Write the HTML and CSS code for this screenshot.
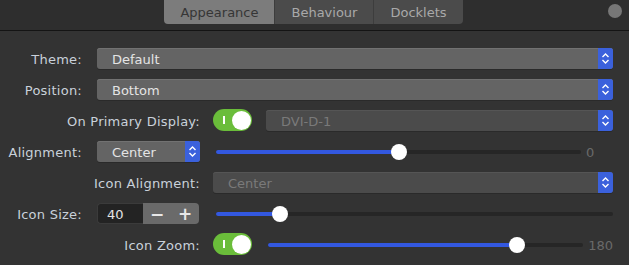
FILE: index.html
```html
<!DOCTYPE html>
<html lang="en">
<head>
    <meta charset="UTF-8">
    <meta name="viewport" content="width=device-width, initial-scale=1.0">
    <title>Dock Preferences</title>
    <link rel="stylesheet" href="styles.css">
</head>
<body>

<header class="topbar">
    <nav class="tabs">
        <span class="tab active">Appearance</span>
        <span class="tab">Behaviour</span>
        <span class="tab">Docklets</span>
    </nav>
    <span class="dot"></span>
</header>

<main class="prefs">
    <!-- theme -->
    <span class="lbl">Theme:</span>
    <div class="combo wide">
        <span class="combo-value">Default</span>
        <span class="combo-btn"><svg width="15" height="21" viewBox="0 0 15 21"><polyline points="4.5,9 7.5,6 10.5,9"/><polyline points="4.5,12 7.5,15 10.5,12"/></svg></span>
    </div>

    <!-- position -->
    <span class="lbl">Position:</span>
    <div class="combo wide">
        <span class="combo-value">Bottom</span>
        <span class="combo-btn"><svg width="15" height="21" viewBox="0 0 15 21"><polyline points="4.5,9 7.5,6 10.5,9"/><polyline points="4.5,12 7.5,15 10.5,12"/></svg></span>
    </div>

    <!-- primary display -->
    <span class="lbl lbl-long">On Primary Display:</span>
    <div class="switch"><span class="switch-mark"></span><span class="switch-knob"></span></div>
    <div class="combo disabled last">
        <span class="combo-value">DVI-D-1</span>
        <span class="combo-btn"><svg width="15" height="21" viewBox="0 0 15 21"><polyline points="4.5,9 7.5,6 10.5,9"/><polyline points="4.5,12 7.5,15 10.5,12"/></svg></span>
    </div>

    <!-- alignment -->
    <span class="lbl">Alignment:</span>
    <div class="combo mid">
        <span class="combo-value">Center</span>
        <span class="combo-btn"><svg width="15" height="21" viewBox="0 0 15 21"><polyline points="4.5,9 7.5,6 10.5,9"/><polyline points="4.5,12 7.5,15 10.5,12"/></svg></span>
    </div>
    <div class="slider from-toggle">
        <div class="track">
            <div class="fill" style="width: 50%"></div>
            <span class="thumb" style="left: 50%"></span>
        </div>
        <span class="slider-value val-short">0</span>
    </div>

    <!-- icon alignment -->
    <span class="lbl lbl-long">Icon Alignment:</span>
    <div class="combo disabled from-toggle">
        <span class="combo-value">Center</span>
        <span class="combo-btn"><svg width="15" height="21" viewBox="0 0 15 21"><polyline points="4.5,9 7.5,6 10.5,9"/><polyline points="4.5,12 7.5,15 10.5,12"/></svg></span>
    </div>

    <!-- icon size -->
    <span class="lbl">Icon Size:</span>
    <div class="spin mid">
        <span class="spin-entry">40</span>
        <span class="spin-btn">&minus;</span>
        <span class="spin-btn">+</span>
    </div>
    <div class="slider from-toggle">
        <div class="track">
            <div class="fill" style="width: 16%"></div>
            <span class="thumb" style="left: 16%"></span>
        </div>
    </div>

    <!-- icon zoom -->
    <span class="lbl lbl-long">Icon Zoom:</span>
    <div class="switch"><span class="switch-mark"></span><span class="switch-knob"></span></div>
    <div class="slider last zoom">
        <div class="track">
            <div class="fill" style="width: 79%"></div>
            <span class="thumb" style="left: 79%"></span>
        </div>
        <span class="slider-value">180</span>
    </div>
</main>

</body>
</html>
```

FILE: styles.css
```css
html, body {
    margin: 0;
    padding: 0;
}
body {
    width: 629px;
    height: 265px;
    background-color: #333333;
    font-family: "DejaVu Sans", "Noto Sans", sans-serif;
    font-size: 13px;
    overflow: hidden;
}

/* top bar with the stack switcher */
.topbar {
    height: 30px;
    background-color: #2e2e2e;
    border-bottom: 1px solid #141414;
    display: grid;
    grid-template-columns: 1fr auto 1fr;
    align-items: start;
}
.tabs {
    grid-column: 2;
    display: flex;
    height: 24px;
    border-radius: 0 0 4px 4px;
    overflow: hidden;
    margin-left: -2px;
}
.tab {
    display: flex;
    align-items: center;
    padding: 1px 16px 0;
    background-color: #4b4b4b;
    color: #a9a9a9;
    border-left: 1px solid #3d3d3d;
}
.tab.active {
    background-color: #7c7c7c;
    color: #363636;
    border-left: none;
}
.dot {
    grid-column: 3;
    justify-self: end;
    width: 14px;
    height: 14px;
    margin: 4px 7px 0 0;
    border-radius: 50%;
    background-color: #777777;
}

/* settings grid: label | gutter | small | gutter | toggle | gutter | rest */
.prefs {
    display: grid;
    grid-template-columns: 82px 15px 103px 13px 39px 14px 1fr;
    grid-auto-rows: 21px;
    row-gap: 10px;
    padding: 17px 16px 0 0;
}
.lbl {
    grid-column: 1;
    display: flex;
    align-items: center;
    justify-content: flex-end;
    padding-top: 1px;
    color: #c9d1da;
    letter-spacing: 0.25px;
    white-space: nowrap;
}
.lbl-long {
    grid-column: 1 / 4;
}
.wide {
    grid-column: 3 / -1;
}
.mid {
    grid-column: 3;
}
.from-toggle {
    grid-column: 5 / -1;
}
.last {
    grid-column: 7;
}

/* combo boxes */
.combo {
    display: flex;
    align-items: center;
    background-color: #646464;
    border-radius: 3px;
    box-shadow: inset 0 1px #727272, 0 1px #2a2a2a;
    overflow: hidden;
}
.combo-value {
    flex: 1;
    padding: 1px 0 0 15px;
    color: #e4e4e4;
}
.combo-btn {
    width: 15px;
    height: 21px;
    background-color: #3b61dc;
    display: flex;
}
.combo-btn svg polyline {
    fill: none;
    stroke: #ffffff;
    stroke-width: 1.4;
}
.combo.disabled {
    background-color: #4b4b4b;
    box-shadow: inset 0 1px #555555, 0 1px #2a2a2a;
}
.combo.disabled .combo-value {
    color: #7a7a7a;
}

/* toggle switch */
.switch {
    grid-column: 5;
    height: 22px;
    margin-top: -1px;
    border-radius: 11px;
    background-color: #6abd3a;
    display: flex;
    align-items: center;
    justify-content: space-between;
    padding: 0 1px 0 10px;
}
.switch-mark {
    width: 1.5px;
    height: 8px;
    background-color: #ffffff;
}
.switch-knob {
    width: 19px;
    height: 19px;
    border-radius: 50%;
    background-color: #ffffff;
}

/* sliders */
.slider {
    display: flex;
    align-items: center;
    margin-left: 3px;
}
.slider.zoom {
    margin-left: 2px;
}
.track {
    flex: 1;
    height: 4px;
    border-radius: 2px;
    background-color: #262626;
    position: relative;
}
.fill {
    height: 4px;
    border-radius: 2px;
    background-color: #3358e0;
}
.thumb {
    position: absolute;
    top: -6px;
    width: 16px;
    height: 16px;
    margin-left: -8px;
    border-radius: 50%;
    background-color: #ffffff;
}
.slider-value {
    margin-left: 5px;
    padding-top: 1px;
    color: #6a6a6a;
}
.slider-value.val-short {
    width: 27px;
}

/* spin button */
.spin {
    display: flex;
}
.spin-entry {
    width: 36px;
    padding: 1px 0 0 9px;
    display: flex;
    align-items: center;
    background-color: #232323;
    border: 1px solid #3b3b3b;
    border-right: none;
    border-radius: 4px 0 0 4px;
    color: #e4e4e4;
}
.spin-btn {
    width: 28px;
    display: flex;
    align-items: center;
    justify-content: center;
    background-color: #6a6a6a;
    color: #e8e8e8;
    font-size: 17px;
    font-weight: bold;
}
.spin-btn:last-child {
    border-radius: 0 4px 4px 0;
}
```
